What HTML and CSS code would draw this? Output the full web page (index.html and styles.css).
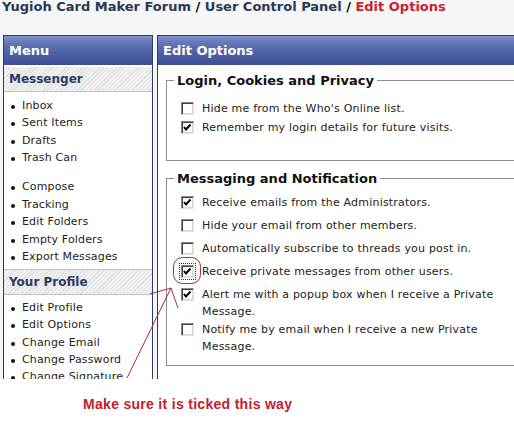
FILE: index.html
```html
<!DOCTYPE html>
<html>
<head>
<meta charset="utf-8">
<link rel="stylesheet" href="styles.css">
</head>
<body>
<div class="page">
  <div class="top">
    <h1 class="crumbs">Yugioh Card Maker Forum <span class="sep">/</span> User Control Panel <span class="sep">/</span> <span class="cur">Edit Options</span></h1>
    <div class="cols">
      <aside class="panel menu">
        <div class="phead">Menu</div>
        <div class="shead">Messenger</div>
        <ul class="links">
          <li>Inbox</li>
          <li>Sent Items</li>
          <li>Drafts</li>
          <li>Trash Can</li>
        </ul>
        <ul class="links group">
          <li>Compose</li>
          <li>Tracking</li>
          <li>Edit Folders</li>
          <li>Empty Folders</li>
          <li>Export Messages</li>
        </ul>
        <div class="shead sub">Your Profile</div>
        <ul class="links prof">
          <li>Edit Profile</li>
          <li>Edit Options</li>
          <li>Change Email</li>
          <li>Change Password</li>
          <li>Change Signature</li>
        </ul>
      </aside>
      <main class="panel main">
        <div class="phead">Edit Options</div>
        <div class="pbody">
          <section class="box first">
            <div class="legend">Login, Cookies and Privacy</div>
            <div class="opt"><span class="cb"></span><span class="lbl">Hide me from the Who's Online list.</span></div>
            <div class="opt"><span class="cb on"><svg viewBox="0 0 13 13" width="13" height="13"><polyline points="3,6 5,8.5 9.5,3.5" /></svg></span><span class="lbl">Remember my login details for future visits.</span></div>
          </section>
          <section class="box second">
            <div class="legend">Messaging and Notification</div>
            <div class="opt"><span class="cb on"><svg viewBox="0 0 13 13" width="13" height="13"><polyline points="3,6 5,8.5 9.5,3.5" /></svg></span><span class="lbl">Receive emails from the Administrators.</span></div>
            <div class="opt"><span class="cb"></span><span class="lbl">Hide your email from other members.</span></div>
            <div class="opt"><span class="cb"></span><span class="lbl">Automatically subscribe to threads you post in.</span></div>
            <div class="opt"><span class="cb on focus"><svg viewBox="0 0 13 13" width="13" height="13"><polyline points="3,6 5,8.5 9.5,3.5" /></svg></span><span class="lbl">Receive private messages from other users.</span></div>
            <div class="opt"><span class="cb on"><svg viewBox="0 0 13 13" width="13" height="13"><polyline points="3,6 5,8.5 9.5,3.5" /></svg></span><span class="lbl">Alert me with a popup box when I receive a Private Message.</span></div>
            <div class="opt"><span class="cb"></span><span class="lbl">Notify me by email when I receive a new Private Message.</span></div>
          </section>
        </div>
      </main>
    </div>
  </div>
  <p class="note">Make sure it is ticked this way</p>
  <svg class="annot" width="514" height="426" viewBox="0 0 514 426">
    <rect x="173.5" y="257.5" width="27" height="26" rx="9" ry="9" />
    <polyline points="127,378 171,288" />
    <polyline points="150,294 171,288 178,308" />
  </svg>
</div>
</body>
</html>
```

FILE: styles.css
```css
html, body {
  margin: 0;
  padding: 0;
}
body {
  width: 514px;
  height: 426px;
  overflow: hidden;
  background: #ffffff;
  font-family: "DejaVu Sans", Verdana, sans-serif;
  color: #222;
}
.page {
  position: relative;
  width: 514px;
  height: 426px;
  overflow: hidden;
}
.top {
  height: 379px;
  overflow: hidden;
  background: #f5f6f8;
}
.crumbs {
  margin: 0;
  padding-left: 2px;
  font-size: 13px;
  line-height: 13px;
  font-weight: bold;
  color: #2c3755;
  white-space: nowrap;
}
.crumbs .sep { color: #000; }
.crumbs .cur { color: #c8232c; }

.cols {
  display: flex;
  gap: 4px;
  margin-top: 22px;
  padding-left: 3px;
  align-items: flex-start;
}
.panel {
  flex: none;
  background: #fff;
  border: 1px solid #2e3a66;
  height: 420px;
}
.menu { width: 148px; }
.main { width: 520px; }

.phead {
  height: 29px;
  line-height: 29px;
  padding-left: 5px;
  font-size: 13px;
  font-weight: bold;
  color: #fff;
  background: linear-gradient(#8595cd 0, #6d7fc0 4px, #5466ab 14px, #3d4f91 29px);
  border-bottom: 1px solid #fff;
}
.shead {
  height: 24px;
  line-height: 24px;
  padding-left: 5px;
  font-size: 12px;
  font-weight: bold;
  color: #2c3a66;
  border-top: 1px solid #fff;
  border-bottom: 1px solid #c2c2c2;
  background: repeating-linear-gradient(-45deg, #f1f1f1 0 2px, #e0e0e0 2px 3px);
}
.shead.sub {
  border-top: 1px solid #c2c2c2;
  margin-top: 3px;
}
.links {
  list-style: none;
  margin: 0;
  padding: 4.5px 0 0 0;
}
.links.group { margin-top: 11.5px; padding-top: 0; }
.links.prof { padding-top: 4.5px; }
.links li {
  position: relative;
  padding-left: 18px;
  font-size: 11px;
  letter-spacing: 0.15px;
  line-height: 17.5px;
  color: #222;
  white-space: nowrap;
}
.links.prof li { line-height: 17.25px; }
.links li::before {
  content: "";
  position: absolute;
  left: 7px;
  top: 8px;
  width: 4px;
  height: 4px;
  border-radius: 50%;
  background: #111;
}

.pbody {
  padding: 14px 0 0 8px;
}
.box {
  border: 1px solid #8e8e8e;
  border-right: none;
  padding: 0 0 22px 0;
}
.legend {
  display: table;
  margin: -7px 0 12.5px 7px;
  padding: 0 3px;
  background: #fff;
  font-size: 13px;
  line-height: 13px;
  font-weight: bold;
  color: #111;
}
.box.first .opt { min-height: 19px; }
.box.second {
  margin-top: 17px;
  padding-bottom: 8.5px;
}
.box.second .legend { margin-bottom: 9.5px; }
.opt {
  display: flex;
  align-items: flex-start;
  padding-left: 14px;
  min-height: 23px;
}
.cb {
  flex: none;
  box-sizing: border-box;
  width: 13px;
  height: 13px;
  margin-top: 2px;
  margin-right: 8px;
  background: #fff;
  border: 1px solid;
  border-color: #8a8a8a #e4e4e4 #e4e4e4 #8a8a8a;
  box-shadow: inset 1px 1px 0 #404040, inset -1px -1px 0 #d8d6d0;
  position: relative;
}
.cb svg {
  position: absolute;
  left: -1px;
  top: -1px;
}
.cb polyline {
  fill: none;
  stroke: #000;
  stroke-width: 2;
}
.cb.focus {
  outline: 1px dotted #333;
  outline-offset: 1px;
}
.lbl {
  font-size: 11px;
  letter-spacing: 0.2px;
  line-height: 17px;
  padding-bottom: 1px;
  color: #222;
  width: 310px;
}

.note {
  margin: 17px 0 0 83px;
  font-family: "Liberation Sans", Arial, sans-serif;
  font-size: 14px;
  line-height: 16px;
  font-weight: bold;
  letter-spacing: 0.3px;
  color: #c4202b;
}
.annot {
  position: absolute;
  left: 0;
  top: 0;
  pointer-events: none;
}
.annot rect, .annot polyline {
  fill: none;
  stroke: #a82c3c;
  stroke-width: 1;
}
```
